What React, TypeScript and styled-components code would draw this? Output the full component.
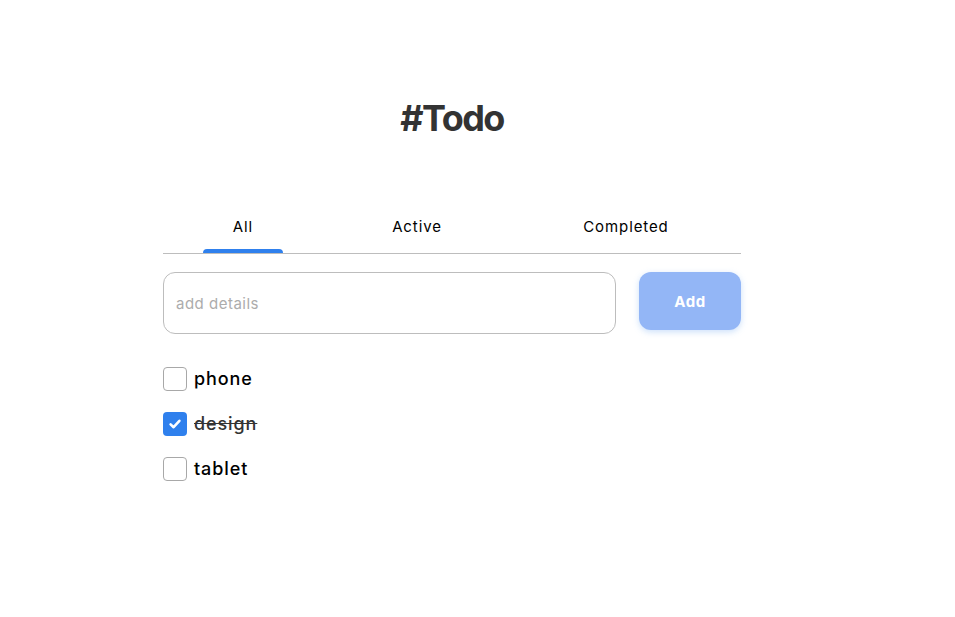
import React, { useState } from "react";
import styled, { createGlobalStyle } from "styled-components";

const Global = createGlobalStyle`
  html, body { margin: 0; padding: 0; background: #ffffff; }
  body { margin: 8px; font-family: "Inter", "Open Sans", sans-serif; color: #000; }
  * { box-sizing: border-box; }
`;

const Page = styled.div`
  padding-top: 88px;
  margin-left: 155px;
  width: 578px;
`;

const Title = styled.h1`
  margin: 0;
  text-align: center;
  font-size: 36px;
  line-height: 44px;
  font-weight: 700;
  color: #333333;
  letter-spacing: -1.6px;
`;

const TabBar = styled.nav`
  margin-top: 78px;
  display: flex;
  justify-content: space-around;
  border-bottom: 1px solid #bdbdbd;
`;

const Tab = styled.button<{ $w: number }>`
  width: ${(p) => p.$w}px;
  background: none;
  border: none;
  padding: 0;
  display: flex;
  flex-direction: column;
  align-items: stretch;
  cursor: pointer;
  font-family: inherit;
`;

const TabLabel = styled.span`
  font-size: 15px;
  line-height: 18px;
  font-weight: 400;
  letter-spacing: 0.9px;
  color: #000;
  text-align: center;
  margin-bottom: 13px;
`;

const Indicator = styled.span<{ $on: boolean }>`
  height: 4px;
  border-radius: 4px 4px 0 0;
  background: ${(p) => (p.$on ? "#2f80ed" : "transparent")};
`;

const Form = styled.form`
  margin-top: 18px;
  display: flex;
  align-items: flex-start;
  gap: 23px;
`;

const Input = styled.input`
  flex: 1;
  height: 62px;
  border: 1px solid #bdbdbd;
  border-radius: 12px;
  padding: 0 12px;
  font-family: inherit;
  font-size: 15px;
  letter-spacing: 0.5px;
  color: #333;
  outline: none;
  &::placeholder { color: #acacac; }
`;

const AddButton = styled.button`
  width: 102px;
  height: 58px;
  border: none;
  border-radius: 12px;
  background: #93b6f6;
  color: #ffffff;
  font-family: inherit;
  font-size: 15px;
  letter-spacing: 0.6px;
  font-weight: 700;
  box-shadow: 0 2px 6px rgba(127, 177, 243, 0.4);
  cursor: pointer;
`;

const List = styled.ul`
  list-style: none;
  margin: 33px 0 0;
  padding: 0;
  display: flex;
  flex-direction: column;
  gap: 21px;
`;

const Item = styled.li`
  display: flex;
  align-items: center;
  gap: 7px;
  height: 24px;
`;

const Box = styled.span<{ $on: boolean }>`
  width: 24px;
  height: 24px;
  border-radius: 4px;
  display: flex;
  align-items: center;
  justify-content: center;
  border: ${(p) => (p.$on ? "none" : "1px solid #a8a8a8")};
  background: ${(p) => (p.$on ? "#2f80ed" : "#fff")};
`;

const Label = styled.span<{ $done: boolean }>`
  font-size: 18px;
  line-height: 22px;
  font-weight: 500;
  letter-spacing: 0.9px;
  color: ${(p) => (p.$done ? "#333333" : "#000")};
  text-decoration: ${(p) => (p.$done ? "line-through" : "none")};
`;

const tabs = [
  { name: "All", w: 80 },
  { name: "Active", w: 108 },
  { name: "Completed", w: 150 },
];

const todos = [
  { text: "phone", done: false },
  { text: "design", done: true },
  { text: "tablet", done: false },
];

export default function App() {
  const [active, setActive] = useState("All");
  return (
    <Page>
      <Global />
      <Title>#Todo</Title>
      <TabBar>
        {tabs.map((t) => (
          <Tab key={t.name} $w={t.w} onClick={() => setActive(t.name)}>
            <TabLabel>{t.name}</TabLabel>
            <Indicator $on={active === t.name} />
          </Tab>
        ))}
      </TabBar>
      <Form onSubmit={(e) => e.preventDefault()}>
        <Input placeholder="add details" />
        <AddButton type="submit">Add</AddButton>
      </Form>
      <List>
        {todos.map((t) => (
          <Item key={t.text}>
            <Box $on={t.done}>
              {t.done && (
                <svg width="14" height="14" viewBox="0 0 14 14">
                  <path d="M2.6 7.4 L5.6 10.2 L11.4 3.8" fill="none" stroke="#fff" strokeWidth="2.6" strokeLinecap="round" strokeLinejoin="round" />
                </svg>
              )}
            </Box>
            <Label $done={t.done}>{t.text}</Label>
          </Item>
        ))}
      </List>
    </Page>
  );
}
